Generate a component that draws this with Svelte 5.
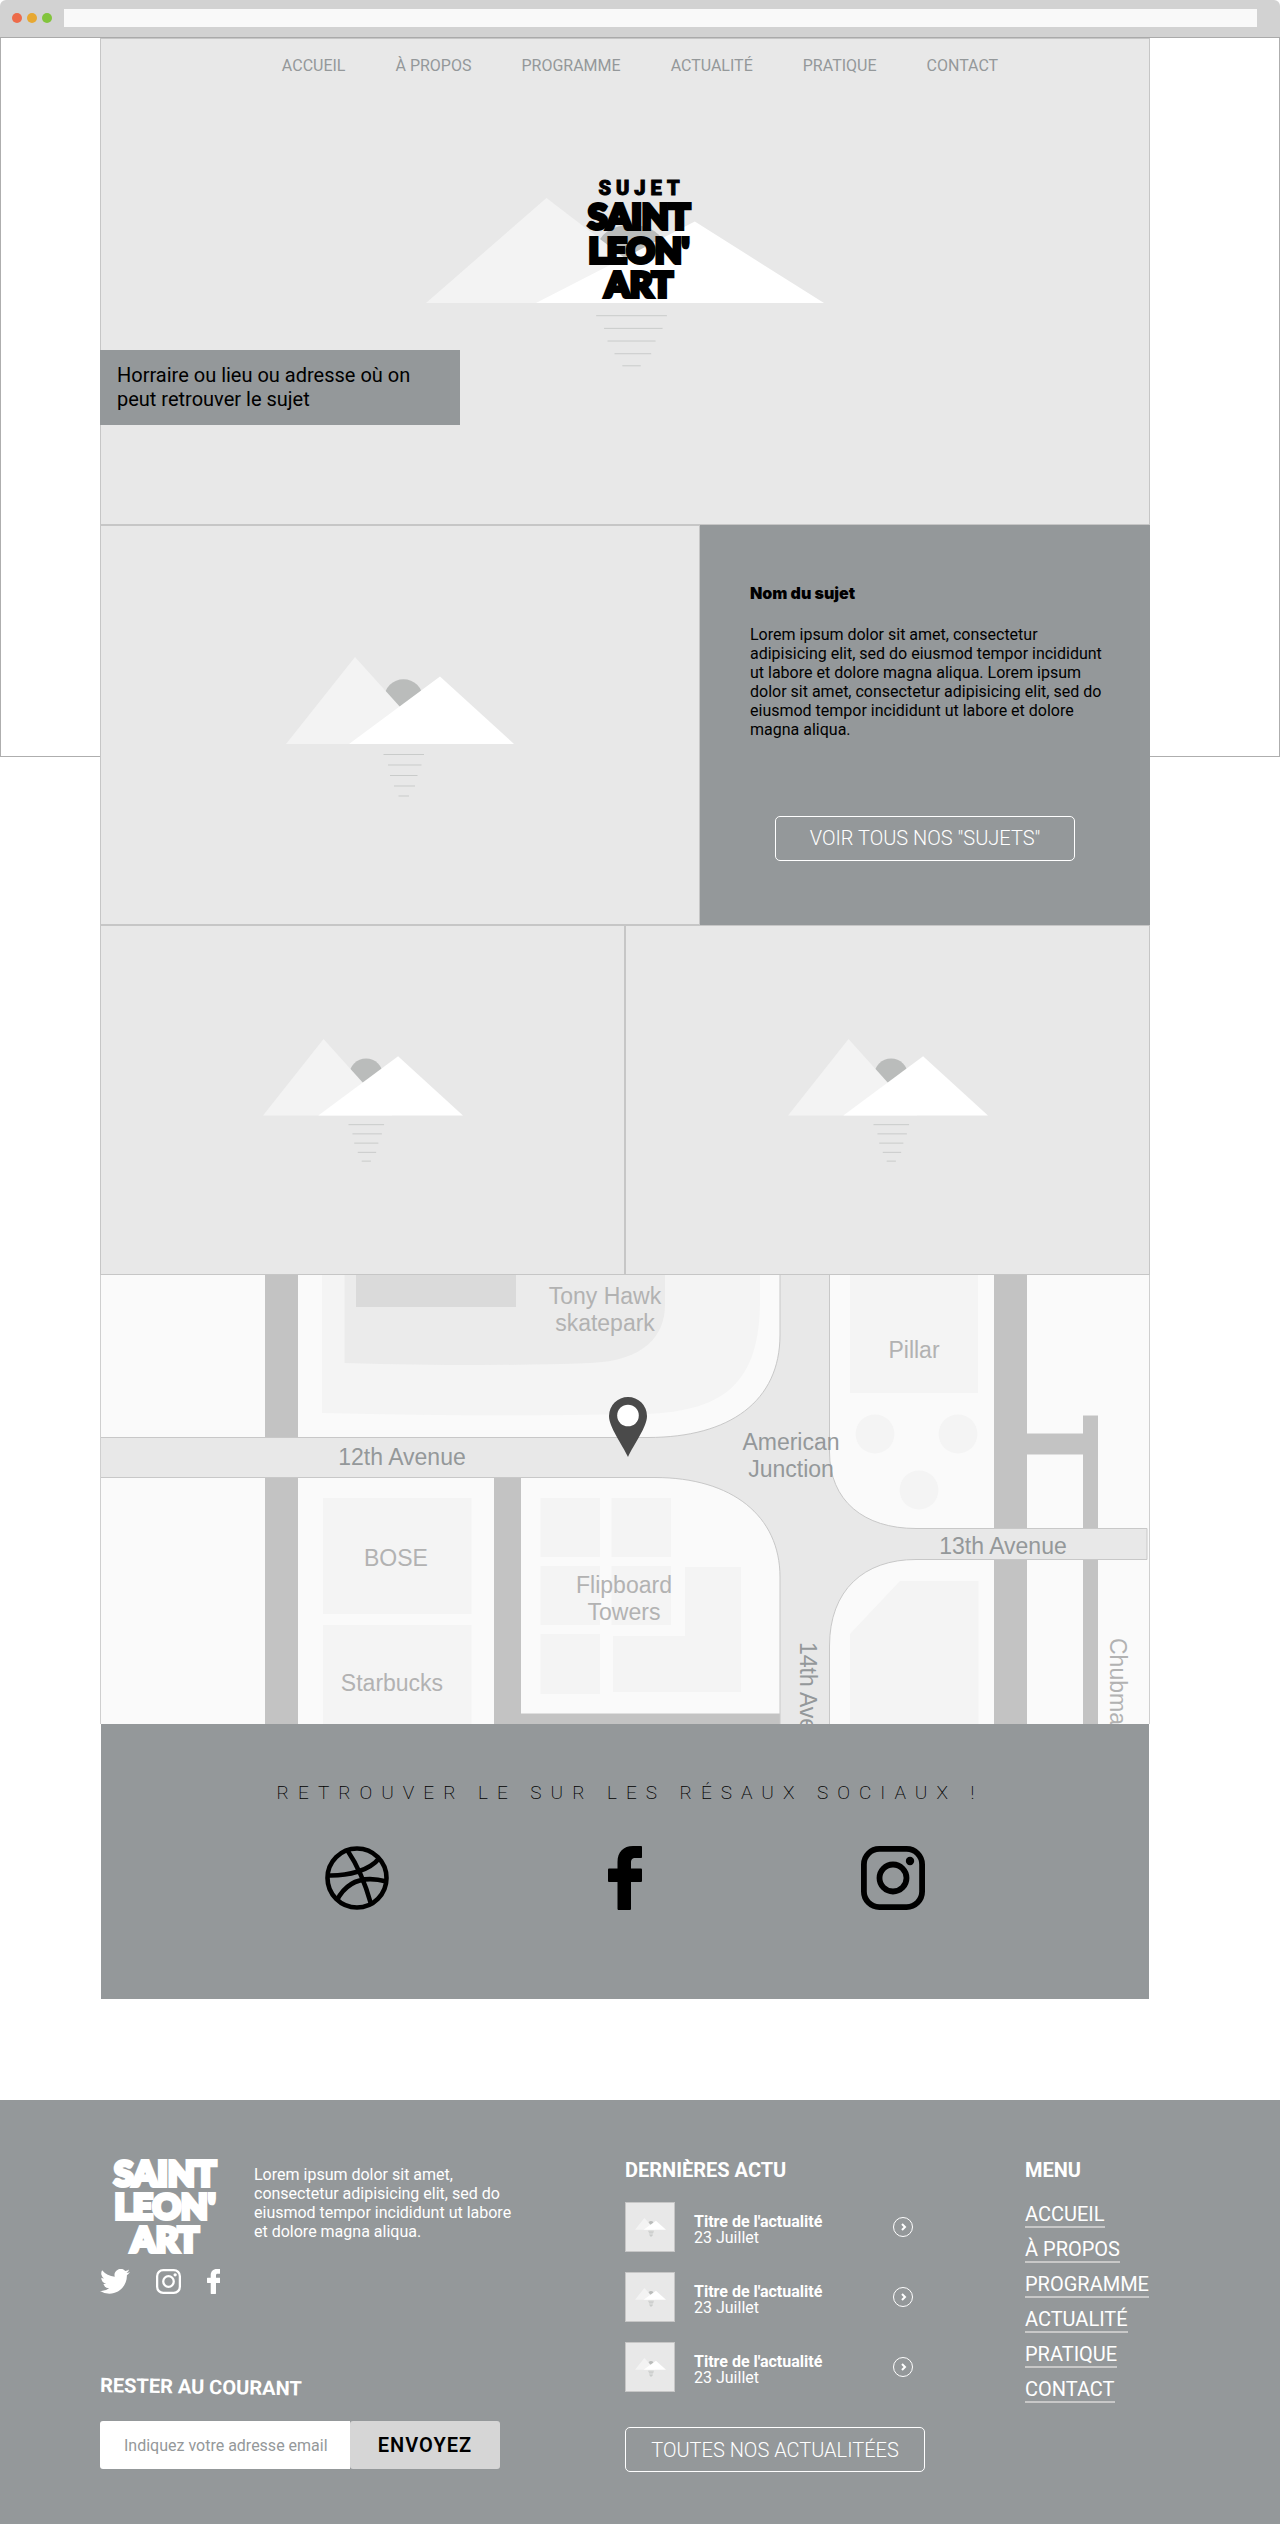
<script>
  const links = ['ACCUEIL', 'À PROPOS', 'PROGRAMME', 'ACTUALITÉ', 'PRATIQUE', 'CONTACT'];
  const news = [1, 2, 3].map((id) => ({ id, title: "Titre de l'actualité", date: '23 Juillet' }));
  let email = $state('');
</script>

{#snippet landscape(kind)}
  <svg class="landscape {kind}" viewBox="0 0 228 140" preserveAspectRatio="none" aria-hidden="true">
    <circle cx="117.5" cy="41.5" r="19.3" fill="#babcbb" />
    <polygon points="0,87 69,0 147.5,87" fill="#f3f3f3" />
    <polygon points="63,87 154,19.5 228,87" fill="#fff" />
    <path d="M97.5 97.5h40.5M102 108h33.5M104 118.5h27.5M108 129h21M112.5 139h10.500" stroke="#c9cbca" fill="none" vector-effect="non-scaling-stroke" />
  </svg>
{/snippet}

{#snippet facebook()}
  <svg class="fb" viewBox="0 0 34 64" aria-hidden="true"><path fill="currentColor" d="M33 0H25C15.500 0 9.500 6 9.500 16V22.500H1.300C.5 22.500 0 23 0 23.800V34.700C0 35.500.5 36 1.300 36H9.500V62.700C9.500 63.500 10 64 10.800 64H21.700C22.500 64 23 63.500 23 62.700V36H32.700C33.500 36 34 35.500 34 34.700V23.800C34 23 33.500 22.500 32.700 22.500H23V17C23 13.500 24 12 27.500 12H33C33.600 12 34 11.500 34 10.900V1.200C34 .5 33.600 0 33 0Z" /></svg>
{/snippet}

{#snippet instagram()}
  <svg class="insta" viewBox="0 0 64 64" aria-hidden="true"><rect x="2.900" y="2.900" width="58.200" height="58.200" rx="15.500" fill="none" stroke="currentColor" stroke-width="5.800" /><circle cx="32" cy="32" r="13.500" fill="none" stroke="currentColor" stroke-width="5.800" /><circle cx="49" cy="15" r="4.200" fill="currentColor" /></svg>
{/snippet}

<div class="window">
  <div class="chrome">
    <i class="dot red"></i><i class="dot amber"></i><i class="dot green"></i>
    <input class="address" type="text" aria-label="Adresse" />
  </div>
  <div class="frame"></div>

  <main>
    <section class="hero">
      <nav aria-label="Navigation principale">
        {#each links as link}<a href="#top">{link}</a>{/each}
      </nav>
      <div class="stage">
        {@render landscape('wide')}
        <h1 class="logo">
          <small>SUJET</small>
          <span>SAINT</span><span>LEON'</span><span>ART</span>
        </h1>
      </div>
      <p class="place">Horraire ou lieu ou adresse où on peut retrouver le sujet</p>
    </section>

    <section class="feature">
      <div class="tile">{@render landscape('medium')}</div>
      <div class="about">
        <h2>Nom du sujet</h2>
        <p>Lorem ipsum dolor sit amet, consectetur adipisicing elit, sed do eiusmod tempor incididunt ut labore et dolore magna aliqua. Lorem ipsum dolor sit amet, consectetur adipisicing elit, sed do eiusmod tempor incididunt ut labore et dolore magna aliqua.</p>
        <button class="outline">VOIR TOUS NOS "SUJETS"</button>
      </div>
    </section>

    <section class="pair">
      <div class="tile">{@render landscape('small')}</div>
      <div class="tile">{@render landscape('small')}</div>
    </section>

    <svg class="map" viewBox="0 0 1050 449" role="img" aria-label="Plan du quartier">
      <rect width="1050" height="449" fill="#fafafa" />
      <g fill="#f4f4f4">
        <path d="M222 0V138Q390 142 535 139C625 139 660 108 660 25V0Z" />
        <path d="M223 223h148.500v116h-148.500zM223 350h148.500v99h-148.500z" />
        <path d="M440.500 223h59.500v59h-59.500zM440.500 291h59.500v59h-59.500zM440.500 359h59.500v60h-59.500zM511.500 223h59.500v59h-59.500zM511.500 291h59.500v59h-59.500zM513 361H585V292H641V417H513Z" />
        <path d="M750 0h128v118h-128zM800 306H878.500V449H750V359Z" />
        <circle cx="775" cy="159" r="19.400" /><circle cx="858" cy="159" r="19.400" /><circle cx="819" cy="215" r="19.400" />
      </g>
      <path d="M244.500 0V88Q390 92 490 88C545 86 565 60 565 30V0Z" fill="#ebebeb" />
      <rect x="256" width="160" height="32" fill="#dadada" />
      <path d="M165 0h33v449h-33zM394 203h27v235.500h259v10.500h-286zM894 0h33v158.500h56v-18h15v308.500h-15v-269.500h-56v269.500h-33z" fill="#c3c3c3" />
      <path d="M-2 162.500H548C630 162.500 680 126 680 60V-2H729.500V177C729.500 226 764 253.500 816 253.500H1047V284.500H816C764 284.500 729.500 315 729.500 371V451H680V302C680 241 632 202.500 555 202.500H-2Z" fill="#e8e8e8" stroke="#c8c8c8" />
      <g class="places" text-anchor="middle">
        <text x="505" y="29">Tony Hawk</text><text x="505" y="56">skatepark</text>
        <text x="814" y="83">Pillar</text>
        <text x="296" y="291">BOSE</text><text x="292" y="416">Starbucks</text>
        <text x="524" y="318">Flipboard</text><text x="524" y="345">Towers</text>
      </g>
      <g class="streets" text-anchor="middle">
        <text x="302" y="190">12th Avenue</text>
        <text x="691" y="175">American</text><text x="691" y="202">Junction</text>
        <text x="903" y="279">13th Avenue</text>
      </g>
      <text class="streets" transform="translate(700 367) rotate(90)">14th Ave</text>
      <text class="places" transform="translate(1010 363) rotate(90)">Chubma</text>
      <path d="M528 182C522 169 509 152 509 141A19 19 0 0 1 547 141C547 152 534 169 528 182Z" fill="#4a4a4a" />
      <circle cx="528" cy="140.500" r="10.800" fill="#fff" />
      <path d="M.5 0V449M1049.500 0V449" stroke="#cfcfcf" fill="none" />
    </svg>

    <section class="social">
      <h2>RETROUVER LE SUR LES RÉSAUX SOCIAUX !</h2>
      <div class="networks">
        <a href="#dribbble" aria-label="Dribbble">
          <svg viewBox="0 0 64 64" aria-hidden="true"><g fill="none" stroke="currentColor" stroke-width="4.600"><circle cx="32" cy="32" r="29.500" /><path d="M22.500 4.500C33 20 41 40 46 58M3 29.500C23 30 44 25 54.500 12M12 54C22 35 38 29 61.500 35.500" /></g></svg>
        </a>
        <a href="#facebook" aria-label="Facebook">{@render facebook()}</a>
        <a href="#instagram" aria-label="Instagram">{@render instagram()}</a>
      </div>
    </section>
  </main>

  <footer>
    <div class="brand">
      <div class="intro">
        <div class="mark">
          <div class="logo light"><span>SAINT</span><span>LEON'</span><span>ART</span></div>
          <div class="mini">
            <a href="#twitter" aria-label="Twitter">
              <svg class="bird" viewBox="0 0 24 20" aria-hidden="true"><path fill="currentColor" d="M24 2.400a10 10 0 0 1-2.800.8A5 5 0 0 0 23.300.4a10 10 0 0 1-3.100 1.200 4.900 4.900 0 0 0-8.400 4.500A14 14 0 0 1 1.700 1a4.900 4.900 0 0 0 1.500 6.600A5 5 0 0 1 1 7c0 2.300 1.600 4.400 3.900 4.900a5 5 0 0 1-2.200.1 4.900 4.900 0 0 0 4.600 3.400A9.900 9.900 0 0 1 0 17.500 14 14 0 0 0 7.500 19.700c9.100 0 14.300-7.700 14-14.700A10 10 0 0 0 24 2.400Z" /></svg>
            </a>
            <a href="#instagram" aria-label="Instagram">{@render instagram()}</a>
            <a href="#facebook" aria-label="Facebook">{@render facebook()}</a>
          </div>
        </div>
        <p>Lorem ipsum dolor sit amet, consectetur adipisicing elit, sed do eiusmod tempor incididunt ut labore et dolore magna aliqua.</p>
      </div>
      <form onsubmit={(e) => e.preventDefault()}>
        <label for="email">RESTER AU COURANT</label>
        <div class="field">
          <input id="email" type="email" placeholder="Indiquez votre adresse email" bind:value={email} />
          <button>ENVOYEZ</button>
        </div>
      </form>
    </div>

    <div class="news">
      <h3>DERNIÈRES ACTU</h3>
      <ul>
        {#each news as item (item.id)}
          <li>
            <div class="thumb">{@render landscape('tiny')}</div>
            <div class="caption"><strong>{item.title}</strong><span>{item.date}</span></div>
            <a class="more" href="#actualite" aria-label={item.title}>
              <svg viewBox="0 0 20 20" aria-hidden="true"><circle cx="10" cy="10" r="9.500" fill="none" stroke="currentColor" /><path d="M9 7l3 3-3 3" fill="none" stroke="currentColor" stroke-width="2" /></svg>
            </a>
          </li>
        {/each}
      </ul>
      <button class="outline">TOUTES NOS ACTUALITÉES</button>
    </div>

    <nav class="menu" aria-label="Menu">
      <h3>MENU</h3>
      {#each links as link}<a href="#top">{link}</a>{/each}
    </nav>
  </footer>
</div>

<style>
  :global(body) { background: #fff; font-family: Roboto, 'Liberation Sans', sans-serif; }
  * { box-sizing: border-box; }
  h1, h2, h3, p, ul { margin: 0; padding: 0; }
  a { color: inherit; text-decoration: none; }
  button, input { font: inherit; border: 0; padding: 0; margin: 0; }
  svg { display: block; }
  .window { position: relative; }
  .chrome { display: flex; align-items: center; gap: 5px; height: 38px; padding: 0 23px 2px 12px; background: #d2d2d2; border-bottom: 1px solid #aaa; border-radius: 6px 6px 0 0; }
  .dot { width: 10px; height: 10px; border-radius: 50%; }
  .red { background: #ed6b4a; }
  .amber { background: #e7a832; }
  .green { background: #82c43c; }
  .address { flex: 1; min-width: 0; height: 18px; margin-left: 7px; background: #f9f9f9; }
  .frame { position: absolute; top: 37px; left: 0; right: 0; height: 720px; border: 1px solid #aeaeae; z-index: -1; }
  main { margin: 0 130px 0 100px; }

  .hero { height: 487px; background: #e8e8e8; border: 1px solid #c6c6c6; display: flex; flex-direction: column; align-items: flex-start; }
  .hero nav { align-self: stretch; display: flex; justify-content: center; gap: 50px; padding: 17px 0 0 30px; font-size: 16px; line-height: 20px; color: #94989a; }
  .stage { align-self: stretch; display: grid; justify-items: center; padding-top: 122px; height: 274px; }
  .stage > :global(*) { grid-area: 1 / 1; }
  .stage .logo { margin: -20px 0 0 28px; }
  .logo { font: 900 35px/34px Lato, Roboto, sans-serif; color: #000; -webkit-text-stroke: 4px currentColor; text-align: center; }
  .logo span { display: block; }
  .logo small { display: block; font: 900 20px/20px Roboto, sans-serif; letter-spacing: 5px; margin-left: 5px; -webkit-text-stroke: 1px currentColor; }
  .light { color: #fff; line-height: 33px; }
  .place { width: 360px; margin-left: -1px; padding: 13px 20px 14px 17px; background: #94989a; font-size: 20px; line-height: 24px; color: #000; }

  .wide { width: 398px; height: 169px; }
  .medium { width: 228px; height: 140px; }
  .small { width: 200px; height: 123px; }
  .tiny { width: 31px; height: 19px; }

  .feature { display: grid; grid-template-columns: 4fr 3fr; height: 400px; }
  .tile { display: grid; place-items: center; background: #e8e8e8; border: 1px solid #c6c6c6; }
  .feature .tile { padding-top: 3px; }
  .about { display: flex; flex-direction: column; background: #94989a; padding: 58px 40px 0 50px; font-size: 16px; line-height: 19px; color: #000; }
  .about h2 { font: 900 16px/20px Inter, Roboto, sans-serif; margin-bottom: 22px; }
  .outline { width: 300px; height: 45px; background: none; border: 1px solid #fff; border-radius: 5px; color: #fff; font-size: 20px; font-weight: 300; }
  .about .outline { margin: 77px 0 0 25px; }
  .pair { display: grid; grid-template-columns: 1fr 1fr; height: 350px; }
  .map { width: 100%; height: auto; font: 23px 'Liberation Sans', Arial, sans-serif; }
  .places { fill: #b2b2b2; }
  .streets { fill: #94989a; }

  .social { height: 275px; margin: 0 1px; background: #94989a; padding-top: 57px; text-align: center; }
  .social h2 { font-size: 19px; line-height: 24px; font-weight: 200; letter-spacing: 9px; padding-left: 10px; color: #000; }
  .networks { display: flex; justify-content: center; gap: 219px; margin-top: 41px; color: #000; }
  .networks svg { height: 64px; }

  footer { display: grid; grid-template-columns: 21fr 16fr 5fr; margin-top: 101px; height: 424px; padding: 0 130px 0 100px; background: #94989a; color: #fff; }
  .intro { display: flex; gap: 34px; padding-top: 56px; }
  .mark { width: 120px; }
  .mark .logo { margin-left: 10px; }
  .mini { display: flex; justify-content: space-between; margin-top: 14px; }
  .mini svg { height: 25px; }
  .intro p { width: 262px; padding-top: 9px; font-size: 16px; line-height: 19px; }
  form { margin-top: 79px; }
  form label { display: inline-block; font-size: 20px; line-height: 24px; font-weight: 700; transform: rotate(1deg); transform-origin: left; }
  .field { display: flex; width: 400px; margin-top: 24px; }
  .field input { flex: 1; min-width: 0; height: 48px; padding: 0 0 0 24px; background: #fff; border-radius: 3px 0 0 3px; font-size: 16px; }
  .field input::placeholder { color: #94989a; }
  .field button { width: 150px; background: #d6d6d6; border-radius: 3px; font-size: 20px; font-weight: 600; letter-spacing: 1px; color: #000; }
  h3 { font-size: 20px; line-height: 24px; font-weight: 700; }
  .news, .menu { padding-top: 58px; }
  ul { list-style: none; display: grid; gap: 20px; margin: 20px 0 35px; }
  li { display: flex; align-items: center; width: 300px; }
  .thumb { display: grid; place-items: center; width: 50px; height: 50px; background: #e8e8e8; border: 1px solid #c6c6c6; }
  .caption { flex: 1; margin-left: 19px; padding-top: 6px; font-size: 16px; line-height: 16px; }
  .caption strong, .caption span { display: block; }
  .more svg { width: 20px; height: 20px; margin-right: 12px; }
  .menu { display: flex; flex-direction: column; align-items: flex-start; gap: 9px; }
  .menu h3 { margin-bottom: 11px; }
  .menu a { font-size: 20px; line-height: 24px; border-bottom: 2px solid #c8c8c8; }
</style>
